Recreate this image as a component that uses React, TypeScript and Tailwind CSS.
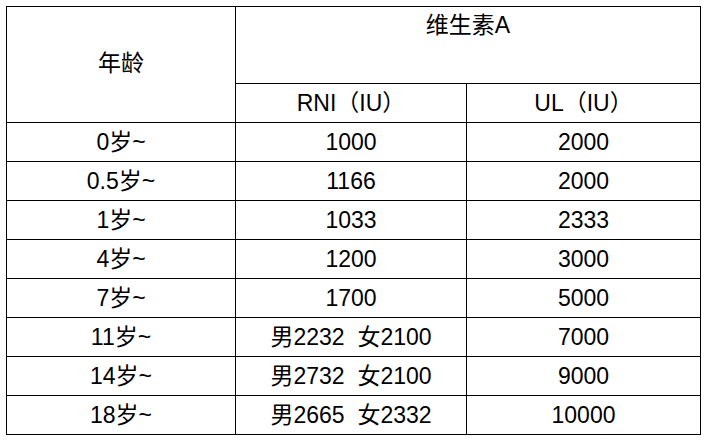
const rows: [string, string, string][] = [
  ['0岁~', '1000', '2000'],
  ['0.5岁~', '1166', '2000'],
  ['1岁~', '1033', '2333'],
  ['4岁~', '1200', '3000'],
  ['7岁~', '1700', '5000'],
  ['11岁~', '男2232  女2100', '7000'],
  ['14岁~', '男2732  女2100', '9000'],
  ['18岁~', '男2665  女2332', '10000'],
];

const cell = 'flex items-center justify-center border-r border-b border-black whitespace-pre';

export default function App() {
  return (
    <div
      className="min-h-[440px] w-[707px] bg-white pl-[6px] pt-[6px] text-[23px] leading-none text-black"
      style={{ fontFamily: '"Liberation Sans", "Noto Sans CJK SC", sans-serif' }}
    >
      <div className="grid w-max grid-cols-[229px_231px_234px] border-t border-l border-black">
        {/* Header */}
        <div className={`${cell} row-span-2 pb-[2px]`}>年龄</div>
        <div className="col-span-2 flex h-[77px] justify-center border-r border-b border-black pt-[7px]">
          维生素A
        </div>
        <div className={`${cell} h-[39px]`}>RNI（IU）</div>
        <div className={`${cell} h-[39px]`}>UL（IU）</div>

        {/* Body */}
        {rows.map(([age, rni, ul]) => (
          <div key={age} className="contents">
            <div className={`${cell} h-[39px]`}>{age}</div>
            <div className={`${cell} h-[39px]`}>{rni}</div>
            <div className={`${cell} h-[39px]`}>{ul}</div>
          </div>
        ))}
      </div>
    </div>
  );
}
